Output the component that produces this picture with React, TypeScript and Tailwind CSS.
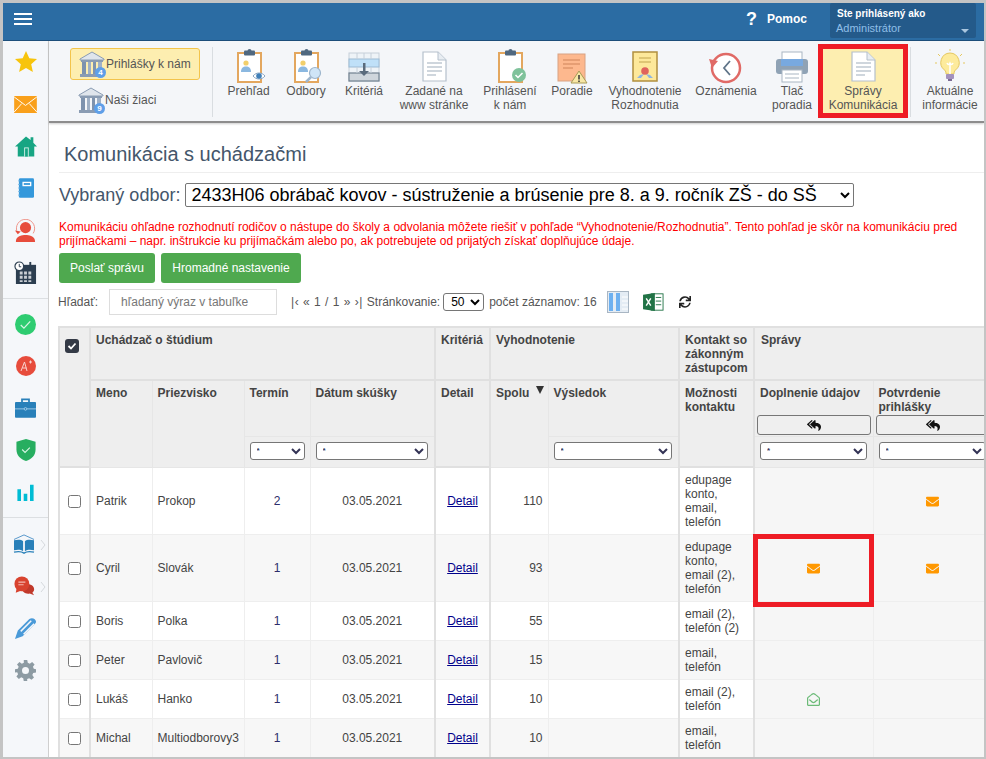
import React from "react";
import { FaReplyAll, FaSync, FaEnvelope, FaRegEnvelopeOpen } from "react-icons/fa";

function Bank({ n }: { n: string }) {
  return (
    <span className="relative block w-[26px] h-[27px] shrink-0">
      <svg viewBox="0 0 26 27" className="w-[26px] h-[27px]">
        <path d="M1 8 13 1l12 7v1H1z" fill="#dfe5ec" stroke="#8a9cb3" strokeWidth="1" />
        <rect x="2" y="9" width="22" height="2" fill="#8a9cb3" />
        <rect x="3" y="11" width="4" height="12" fill="#7e93ae" />
        <rect x="9" y="11" width="3" height="12" fill="#9fb0c5" />
        <rect x="14" y="11" width="3" height="12" fill="#7e93ae" />
        <rect x="19" y="11" width="4" height="12" fill="#9fb0c5" />
        <rect x="1" y="23" width="24" height="3" fill="#8a9cb3" />
      </svg>
      <span className="absolute right-[-1px] bottom-0 w-[11px] h-[11px] rounded-full bg-[#5f9fe8] text-white text-[8px] leading-[11px] text-center font-bold">{n}</span>
    </span>
  );
}

function Clipboard({ children }: { children?: React.ReactNode }) {
  return (
    <svg viewBox="0 0 36 36" className="w-[36px] h-[36px]">
      <rect x="7" y="5" width="23" height="29" fill="#fff" stroke="#e3a75f" strokeWidth="2" />
      <rect x="13" y="2.5" width="11" height="5" rx="1" fill="#50687f" />
      <circle cx="18.5" cy="3" r="2" fill="#50687f" />
      {children}
    </svg>
  );
}

function Person() {
  return (
    <g>
      <circle cx="15" cy="15" r="2.6" fill="#f2cf6b" />
      <path d="M10 24c0-4 2-5.500 5-5.500s5 1.500 5 5.500z" fill="#8bb8e0" />
    </g>
  );
}

function DocIcon() {
  return (
    <svg viewBox="0 0 36 36" className="w-[36px] h-[36px]">
      <path d="M7 4h15l8 8v21H7z" fill="#fff" stroke="#b5c0cc" strokeWidth="1.200" />
      <path d="M22 4v8h8" fill="#e8edf2" stroke="#b5c0cc" strokeWidth="1" />
      <path d="M11 15h15M11 19h15M11 23h15M11 27h9" stroke="#9fadbb" strokeWidth="1.200" />
    </svg>
  );
}

const toolbarItems: { lines: string[]; icon: React.ReactNode; cls: string }[] = [
  {
    lines: ["Prehľad"],
    cls: "ml-[7px] w-[57px]",
    icon: (
      <Clipboard>
        <Person />
        <path d="M22 28c3-4 9-4 12 0-3 4-9 4-12 0z" fill="#fff" stroke="#8ba6c2" />
        <circle cx="28" cy="28" r="2.800" fill="#3f7fb8" />
      </Clipboard>
    ),
  },
  {
    lines: ["Odbory"],
    cls: "w-[58px]",
    icon: (
      <Clipboard>
        <Person />
        <circle cx="27" cy="25" r="5.500" fill="#cfe5f7" stroke="#9db5cc" strokeWidth="1.200" />
        <path d="M23 29l-5 5" stroke="#9db5cc" strokeWidth="2.500" />
      </Clipboard>
    ),
  },
  {
    lines: ["Kritériá"],
    cls: "w-[58px]",
    icon: (
      <svg viewBox="0 0 36 36" className="w-[36px] h-[36px]">
        <rect x="3" y="5" width="30" height="28" fill="#eef3f7" stroke="#c6d0da" />
        <rect x="3" y="11" width="30" height="8" fill="#bfe0f8" stroke="#9dbbd4" />
        <rect x="3" y="25" width="30" height="8" fill="#cfd6dc" stroke="#71808f" strokeWidth="1.200" />
        <path d="M11 5v6M18 5v6M25 5v6M11 19v6M25 19v6" stroke="#c6d0da" />
        <rect x="17" y="15" width="2.500" height="10" fill="#5a6b7c" />
        <path d="M13 23h10l-5 5z" fill="#5a6b7c" />
      </svg>
    ),
  },
  { lines: ["Zadané na", "www stránke"], cls: "w-[82px]", icon: <DocIcon /> },
  {
    lines: ["Prihlásení", "k nám"],
    cls: "ml-[7px] w-[56px]",
    icon: (
      <Clipboard>
        <circle cx="27" cy="27" r="7" fill="#7fc29b" />
        <path d="M23.500 27l2.500 2.500 4.500-4.500" fill="none" stroke="#fff" strokeWidth="1.500" />
      </Clipboard>
    ),
  },
  {
    lines: ["Poradie"],
    cls: "ml-[2px] w-[64px]",
    icon: (
      <svg viewBox="0 0 36 36" className="w-[36px] h-[36px]">
        <rect x="4" y="6" width="27" height="27" fill="#fdb88e" stroke="#d8a283" />
        <path d="M9 12h17M9 16h17M9 20h10" stroke="#d0845a" strokeWidth="1.200" />
        <path d="M25 23l8 12H17z" fill="#f8e7a5" stroke="#a89a55" />
        <path d="M25 27v4.500M25 32.500v1.500" stroke="#333" strokeWidth="1.500" />
      </svg>
    ),
  },
  {
    lines: ["Vyhodnotenie", "Rozhodnutia"],
    cls: "ml-[4px] w-[74px]",
    icon: (
      <svg viewBox="0 0 36 36" className="w-[36px] h-[36px]">
        <rect x="6" y="4" width="24" height="29" fill="#fde89a" stroke="#b08f3e" strokeWidth="1.500" />
        <path d="M12 10h12M12 14h12" stroke="#c2a44f" strokeWidth="1.200" />
        <path d="M13 27l-3 3 4 0 3-4zM23 27l3 3-4 0-3-4z" fill="#8fb5e0" />
        <circle cx="18" cy="23" r="3.800" fill="#e0635c" />
      </svg>
    ),
  },
  {
    lines: ["Oznámenia"],
    cls: "ml-[14px] w-[60px]",
    icon: (
      <svg viewBox="0 0 36 36" className="w-[36px] h-[36px]">
        <circle cx="18" cy="20" r="14" fill="#fff" stroke="#e06a66" strokeWidth="2.500" />
        <path d="M1 11l3 9 6-7z" fill="#e06a66" />
        <path d="M22 13l-6 7 6 7" fill="none" stroke="#5f7488" strokeWidth="1.800" />
      </svg>
    ),
  },
  {
    lines: ["Tlač", "poradia"],
    cls: "ml-[16px] w-[40px]",
    icon: (
      <svg viewBox="0 0 36 36" className="w-[36px] h-[36px]">
        <rect x="8" y="4" width="20" height="8" fill="#fff" stroke="#a9b6c3" />
        <rect x="2" y="11" width="32" height="15" rx="3" fill="#8fa2b5" />
        <rect x="7" y="11" width="22" height="7" fill="#78a9e0" />
        <rect x="8" y="22" width="20" height="12" fill="#fff" stroke="#a9b6c3" />
        <path d="M11 26h14M11 30h14" stroke="#a9b6c3" />
      </svg>
    ),
  },
];

function Toolbar() {
  return (
    <div className="flex h-[82px] pt-[2px] bg-[#f4f6f9] border-b-2 border-[#8d8d8d] shadow-[0_1px_2px_rgba(0,0,0,0.2)]">
      <div className="w-[163px] pl-[21px] pt-[5px] flex flex-col gap-[4px]">
        <div className="w-[130px] h-[32px] rounded-[3px] bg-[#fdeeb0] border border-[#f3c44b] flex items-center pl-[8px] gap-[1px]">
          <Bank n="4" />
          <span>Prihlášky k nám</span>
        </div>
        <div className="w-[130px] h-[32px] flex items-center pl-[8px] gap-[1px]">
          <Bank n="9" />
          <span>Naši žiaci</span>
        </div>
      </div>
      <div className="w-px h-[70px] mt-[4px] bg-[#d9dde1]" />
      {toolbarItems.map((it) => (
        <div key={it.lines[0]} className={`${it.cls} pt-[5px] flex flex-col items-center text-center whitespace-nowrap`}>
          <div className="h-[36px]">{it.icon}</div>
          {it.lines.map((l) => (
            <div key={l} className="h-[14px] leading-[14px]">{l}</div>
          ))}
        </div>
      ))}
      <div className="relative ml-[6px] w-[90px] h-[74px] mt-px bg-[#fdeeb0] pt-[4px] flex flex-col items-center text-center whitespace-nowrap">
        <div className="h-[36px]"><DocIcon /></div>
        <div className="h-[14px] leading-[14px]">Správy</div>
        <div className="h-[14px] leading-[14px]">Komunikácia</div>
        <div className="absolute inset-0 border-[5px] border-[#ee1c25]" />
      </div>
      <div className="ml-[2px] w-px h-[70px] mt-[4px] bg-[#d9dde1]" />
      <div className="ml-[9px] w-[60px] pt-[5px] flex flex-col items-center text-center whitespace-nowrap">
        <div className="h-[36px]">
          <svg viewBox="0 0 36 36" className="w-[36px] h-[36px]">
            <path d="M18 5a9.500 9.500 0 0 0-5.500 17c1.500 1.200 1.500 3 1.500 4h8c0-1 0-2.800 1.500-4A9.500 9.500 0 0 0 18 5z" fill="#fdeb9c" stroke="#e5c860" />
            <path d="M15 15c1 2 2 2 3 0 1 2 2 2 3 0M18 16v10" fill="none" stroke="#fff" strokeWidth="1.500" />
            <rect x="14" y="26" width="8" height="5" rx="1" fill="#a391bd" />
            <path d="M16 32h4" stroke="#7a6b93" strokeWidth="2" />
            <path d="M18 1v2M6 6l2 2M30 6l-2 2M3 15h2M31 15h2" stroke="#e5c860" />
          </svg>
        </div>
        <div className="h-[14px] leading-[14px]">Aktuálne</div>
        <div className="h-[14px] leading-[14px]">informácie</div>
      </div>
    </div>
  );
}

const sideCls = "h-[42px] flex items-center justify-center relative";

function Chevron() {
  return (
    <svg viewBox="0 0 6 12" className="absolute right-[2px] top-[16px] w-[6px] h-[12px]">
      <path d="M1 1l4 5-4 5" fill="none" stroke="#d5d9dd" strokeWidth="1" />
    </svg>
  );
}

function Sidebar() {
  return (
    <div className="w-[46px] shrink-0 bg-[#f5f7fa] border-r border-[#cfcfcf]">
      <div className={sideCls}>
        <svg viewBox="0 0 24 24" className="w-[24px] h-[24px]"><path d="M12 1l3.300 7.300 7.700.8-5.800 5.200 1.700 7.700L12 18l-6.900 4 1.700-7.700L1 9.100l7.700-.8z" fill="#f7c40d" /></svg>
      </div>
      <div className={sideCls}>
        <svg viewBox="0 0 24 18" className="w-[23px] h-[17px]"><rect width="24" height="18" fill="#f9a01b" /><path d="M0 1l12 9 12-9M0 17l8-9M24 17l-8-9" fill="none" stroke="#fff" strokeWidth="1" /></svg>
      </div>
      <div className={sideCls}>
        <svg viewBox="0 0 24 22" className="w-[22px] h-[21px]"><path d="M12 0L0 11h3v11h18V11h3l-4-4V1h-3v3z" fill="#17a583" /><rect x="10" y="12" width="5" height="10" fill="#d5f0e8" /><rect x="11" y="13" width="3" height="9" fill="#17a583" /></svg>
      </div>
      <div className={sideCls}>
        <svg viewBox="0 0 18 22" className="w-[16px] h-[20px]"><rect x="1" width="17" height="22" rx="1.500" fill="#3498db" /><rect x="5" y="4" width="10" height="5" fill="#fff" /><rect x="6.500" y="5.500" width="7" height="2" fill="#3498db" /><path d="M0 3h2M0 7h2M0 11h2M0 15h2M0 19h2" stroke="#7dbbe6" /></svg>
      </div>
      <div className={sideCls}>
        <svg viewBox="0 0 24 24" className="w-[23px] h-[23px]">
          <path d="M3.500 14A9.500 9.500 0 1 1 20 15" fill="none" stroke="#ee9287" strokeWidth="1" />
          <path d="M1 12l3 4 3-3z" fill="#e74c3c" />
          <circle cx="12" cy="9" r="5.800" fill="#e74c3c" />
          <path d="M2 24c0-5 3-6 7-7 2-.5 4-.5 6 0 4 1 7 2 7 7z" fill="#e74c3c" />
        </svg>
      </div>
      <div className={sideCls}>
        <svg viewBox="0 0 24 24" className="w-[23px] h-[23px]">
          <rect x="2" y="4" width="21" height="20" fill="#2c3e50" />
          <path d="M17 1v5" stroke="#2c3e50" strokeWidth="2" />
          <path d="M6 11h3v3H6zM10.500 11h3v3h-3zM15 11h3v3h-3zM6 15.500h3v3H6zM10.500 15.500h3v3h-3zM15 15.500h3v3h-3zM6 20h3v2H6zM10.500 20h3v2h-3zM15 20h3v2h-3z" fill="#c9ced3" />
          <circle cx="5.500" cy="5.500" r="4.500" fill="#fff" stroke="#2c3e50" strokeWidth="1.200" />
          <path d="M5.500 3v3h2" fill="none" stroke="#2c3e50" />
        </svg>
      </div>
      <div className="h-px bg-[#dcdfe2] mt-[5px] mb-[4px]" />
      <div className={sideCls}>
        <svg viewBox="0 0 20 20" className="w-[21px] h-[21px]"><circle cx="10" cy="10" r="10" fill="#2ecc71" /><path d="M5.500 10.500l3 3 6-6.500" fill="none" stroke="#d8f5e4" strokeWidth="1.200" /></svg>
      </div>
      <div className={sideCls}>
        <svg viewBox="0 0 20 20" className="w-[20px] h-[20px]"><circle cx="10" cy="10" r="10" fill="#e74c3c" /><path d="M5 15l3.500-9 2.500 9M6.500 12h4M13 6h3M14.500 4.500v3" fill="none" stroke="#f9d3cf" strokeWidth="1" /></svg>
      </div>
      <div className={sideCls}>
        <svg viewBox="0 0 24 22" className="w-[21px] h-[20px]"><path d="M8 4V1h8v3" fill="none" stroke="#2980b9" strokeWidth="2" /><rect y="4" width="24" height="18" rx="1" fill="#2980b9" /><path d="M0 12h24" stroke="#a9d0ea" /><circle cx="12" cy="12" r="1.500" fill="#2980b9" stroke="#a9d0ea" /></svg>
      </div>
      <div className={sideCls}>
        <svg viewBox="0 0 20 23" className="w-[20px] h-[22px]"><path d="M10 0l10 3v8c0 6-4 10-10 12C4 21 0 17 0 11V3z" fill="#27ae60" /><path d="M6 11l3 3 5-5" fill="none" stroke="#d8f5e4" strokeWidth="1.200" /></svg>
      </div>
      <div className={sideCls}>
        <svg viewBox="0 0 20 20" className="w-[19px] h-[18px]"><path d="M1 7h4v13H1zM8 12h4v8H8zM15 2h4v18h-4z" fill="#00bcd4" /></svg>
      </div>
      <div className="h-px bg-[#dcdfe2] mt-[4px] mb-[5px]" />
      <div className={sideCls}>
        <svg viewBox="0 0 24 22" className="w-[22px] h-[20px] mr-[3px]"><path d="M1 6l11-5 11 5" fill="none" stroke="#4a90c8" strokeWidth="1" /><path d="M1 7c4-1 8-1 10 1v11c-3-2-6-2-10-1zM23 7c-4-1-8-1-10 1v11c3-2 6-2 10-1z" fill="#2980b9" /><path d="M1 20c4-1 8-1 11 1 3-2 7-2 11-1" fill="none" stroke="#2980b9" strokeWidth="1.500" /></svg>
        <Chevron />
      </div>
      <div className={sideCls}>
        <svg viewBox="0 0 24 24" className="w-[21px] h-[21px] mr-[3px]"><path d="M14 9c5 0 9 2 9 6 0 2-1 3-2 4l2 3-5-2c-5 1-9-2-9-6z" fill="#c0392b" /><circle cx="9" cy="9" r="8.500" fill="#d8432f" /><path d="M2 19l1-5 4 3z" fill="#d8432f" /><path d="M5 7h8M5 10h6" stroke="#f3b8af" strokeWidth="1.200" /></svg>
        <Chevron />
      </div>
      <div className={sideCls}>
        <svg viewBox="0 0 24 24" className="w-[23px] h-[23px]"><path d="M1 23l3-9L16 2c3-2 7 0 7 3 0 1-1 2-2 3L9 20z" fill="#4a9ad8" /><path d="M7 15L18 4M10 18L21 7" stroke="#f5f7fa" strokeWidth="1.500" /></svg>
      </div>
      <div className={sideCls}>
        <svg viewBox="0 0 24 24" className="w-[21px] h-[21px]"><path d="M10 0h4l.6 3.200 2.300 1 2.700-1.900 2.800 2.800-1.900 2.700 1 2.300L24 10.700v3.600l-3.200.6-1 2.300 1.900 2.700-2.800 2.800-2.700-1.900-2.300 1L14 24h-4l-.6-3.200-2.300-1-2.700 1.900-2.800-2.800 1.900-2.700-1-2.300L0 14.300v-3.600l3.200-.6 1-2.300-1.900-2.700 2.800-2.800 2.700 1.900 2.300-1zM12 8a4 4 0 1 0 0 8 4 4 0 0 0 0-8z" fill="#8d9ba3" /></svg>
      </div>
    </div>
  );
}

const hTh = "bg-[#eeeeee] border-2 border-[#e0e0e0] align-top text-left font-bold px-[5px] pt-[5px] pb-[3px] leading-[14px]";
const hThin = "bg-[#eeeeee] border border-[#e6e6e6] align-top text-left font-bold px-[5px] py-[5px] leading-[14px]";

function Filter({ w }: { w: string }) {
  return (
    <select className={`${w} h-[18px] block bg-white border border-[#767676] rounded-[3px] text-[8px] pl-[2px] text-[#335]`} defaultValue="*">
      <option>*</option>
    </select>
  );
}

function ReplyBtn() {
  return (
    <button className="w-[114px] h-[20px] bg-[#efefef] border border-[#767676] rounded-[3px] flex items-center justify-center">
      <FaReplyAll className="w-[14px] h-[13px] text-[#111]" />
    </button>
  );
}

type Row = { m: string; p: string; t: string; s: string; c: string[]; h: string; a?: React.ReactNode; b?: React.ReactNode };
const Orange = () => <FaEnvelope className="inline-block w-[13px] h-[13px] text-[#ff9800]" />;
const rows: Row[] = [
  { m: "Patrik", p: "Prokop", t: "2", s: "110", c: ["edupage", "konto,", "email,", "telefón"], h: "h-[67px]", b: <Orange /> },
  { m: "Cyril", p: "Slovák", t: "1", s: "93", c: ["edupage", "konto,", "email (2),", "telefón"], h: "h-[67px]", a: <Orange />, b: <Orange /> },
  { m: "Boris", p: "Polka", t: "1", s: "55", c: ["email (2),", "telefón (2)"], h: "h-[39px]" },
  { m: "Peter", p: "Pavlovič", t: "1", s: "15", c: ["email,", "telefón"], h: "h-[39px]" },
  { m: "Lukáš", p: "Hanko", t: "1", s: "10", c: ["email (2),", "telefón"], h: "h-[39px]", a: <FaRegEnvelopeOpen className="inline-block w-[13px] h-[13px] text-[#6cbb78]" /> },
  { m: "Michal", p: "Multiodborovy3", t: "1", s: "10", c: ["email,", "telefón"], h: "h-[39px]" },
];

function DataTable() {
  const thick = "border-l-2 border-l-[#e0e0e0]";
  return (
    <table className="table-fixed border-collapse w-[932px] leading-[14px] text-[#444]">
      <colgroup>
        <col className="w-[31px]" />
        <col className="w-[62px]" />
        <col className="w-[92px]" />
        <col className="w-[66px]" />
        <col className="w-[125px]" />
        <col className="w-[55px]" />
        <col className="w-[58px]" />
        <col className="w-[131px]" />
        <col className="w-[75px]" />
        <col className="w-[119px]" />
        <col className="w-[118px]" />
      </colgroup>
      <thead>
        <tr className="h-[53px]">
          <th rowSpan={3} className={`${hTh} text-center pt-[11px]`}>
            <span className="inline-flex w-[14px] h-[14px] rounded-[3px] bg-[#343a46] items-center justify-center">
              <svg viewBox="0 0 10 10" className="w-[10px] h-[10px]"><path d="M1.500 5l2.500 2.500 4.500-5" fill="none" stroke="#fff" strokeWidth="1.800" /></svg>
            </span>
          </th>
          <th colSpan={4} className={hTh}>Uchádzač o štúdium</th>
          <th className={hTh}>Kritériá</th>
          <th colSpan={2} className={hTh}>Vyhodnotenie</th>
          <th className={hTh}>Kontakt so zákonným zástupcom</th>
          <th colSpan={2} className={`${hTh} !pl-[6px]`}>Správy</th>
        </tr>
        <tr className="h-[56px]">
          <th rowSpan={2} className={hThin}>Meno</th>
          <th rowSpan={2} className={hThin}>Priezvisko</th>
          <th className={hThin}>Termín</th>
          <th className={hThin}>Dátum skúšky</th>
          <th rowSpan={2} className={hTh}>Detail</th>
          <th rowSpan={2} className={hThin}>
            <div className="flex justify-between items-start">
              <span>Spolu</span>
              <svg viewBox="0 0 8 8" className="w-[8px] h-[8px] mr-[-1px]"><path d="M0 0h8L4 8z" fill="#333" /></svg>
            </div>
          </th>
          <th className={hThin}>Výsledok</th>
          <th rowSpan={2} className={hTh}>Možnosti kontaktu</th>
          <th className={`${hThin} !px-[2px] !pb-0 ${thick}`}>
            <div className="h-[29px] pl-[3px]">Doplnenie údajov</div>
            <ReplyBtn />
          </th>
          <th className={`${hThin} !px-[2px] !pb-0`}>
            <div className="h-[29px] pl-[3px]">Potvrdenie prihlášky</div>
            <ReplyBtn />
          </th>
        </tr>
        <tr className="h-[31px]">
          <th className={`${hThin} align-middle`}><Filter w="w-[55px]" /></th>
          <th className={`${hThin} align-middle`}><Filter w="w-[112px]" /></th>
          <th className={`${hThin} align-middle`}><Filter w="w-[118px]" /></th>
          <th className={`${hThin} align-middle ${thick}`}><Filter w="w-[107px]" /></th>
          <th className={`${hThin} align-middle`}><Filter w="w-[107px]" /></th>
        </tr>
      </thead>
      <tbody>
        {rows.map((r, i) => {
          const bg = i % 2 === 0 ? "bg-white" : "bg-[#f7f7f7]";
          const td = "border border-[#eeeeee] px-[5px] align-middle";
          return (
            <tr key={r.m} className={`${bg} ${r.h}`}>
              <td className={`${td} border-x-2 border-x-[#e0e0e0] text-center`}>
                <input type="checkbox" className="w-[13px] h-[13px] align-middle" />
              </td>
              <td className={td}>{r.m}</td>
              <td className={`${td} whitespace-nowrap`}>{r.p}</td>
              <td className={`${td} text-center text-[#2d2d6b]`}>{r.t}</td>
              <td className={`${td} text-center`}>03.05.2021</td>
              <td className={`${td} border-x-2 border-x-[#e0e0e0] text-center`}>
                <a className="underline text-[#00008b]">Detail</a>
              </td>
              <td className={`${td} text-right`}>{r.s}</td>
              <td className={td}></td>
              <td className={`${td} border-x-2 border-x-[#e0e0e0]`}>
                {r.c.map((l) => <div key={l}>{l}</div>)}
              </td>
              <td className={`${td} bg-[#f6f6f6] text-center`}>{r.a}</td>
              <td className={`${td} bg-[#f6f6f6] text-center`}>{r.b}</td>
            </tr>
          );
        })}
      </tbody>
    </table>
  );
}

export default function App() {
  return (
    <div className="w-[986px] h-[759px] overflow-hidden bg-[#c4c4c4] pt-[3px] pb-[2px] pl-[3px] pr-[2px] text-[12px] leading-[14px] text-[#555]" style={{ fontFamily: '"Liberation Sans", Arial, sans-serif' }}>
      <div className="w-full h-full flex flex-col bg-white overflow-hidden">
        <header className="h-[38px] shrink-0 bg-[#2b6ca3] border-b border-[#1d4f7c] flex items-start text-white">
          <div className="ml-[11px] mt-[10px] w-[18px] flex flex-col gap-[3px]">
            <div className="h-[2px] bg-white" />
            <div className="h-[2px] bg-white" />
            <div className="h-[2px] bg-white" />
          </div>
          <div className="ml-auto mt-[7px] flex items-center h-[18px]">
            <span className="text-[18px] font-bold leading-[18px]">?</span>
            <span className="ml-[10px] font-bold">Pomoc</span>
          </div>
          <div className="ml-[23px] mr-[8px] w-[146px] h-[35px] bg-[#245a8a] rounded-[2px] pl-[7px] pt-[4px] relative">
            <div className="text-[10px] font-bold leading-[14px] whitespace-nowrap">Ste prihlásený ako</div>
            <div className="text-[#90bfe8] text-[11px] leading-[15px] -ml-px">Administrátor</div>
            <div className="absolute right-[7px] bottom-[5px] w-0 h-0 border-x-[4px] border-x-transparent border-t-[4px] border-t-[#a9c6df]" />
          </div>
        </header>
        <div className="flex flex-1 min-h-0">
          <Sidebar />
          <main className="flex-1 min-w-0 flex flex-col">
            <Toolbar />
            <div className="relative flex-1 min-h-0 overflow-hidden pl-[9px]">
              <h1 className="h-[50px] border-b border-[#eeeeee] pl-[5px] pt-[19px] text-[20px] leading-[24px] text-[#44566b] font-normal ml-px">Komunikácia s uchádzačmi</h1>
              <div className="flex items-center mt-[10px] h-[24px] text-[18px] text-[#44566b] ml-px">
                <span>Vybraný odbor:</span>
                <select className="ml-[5px] w-[669px] h-[24px] bg-white border border-[#767676] rounded-[2px] text-[18px] leading-[22px] text-black pl-[1px]" defaultValue="a">
                  <option value="a">2433H06 obrábač kovov - sústruženie a brúsenie pre 8. a 9. ročník ZŠ - do SŠ</option>
                </select>
              </div>
              <p className="mt-[13px] text-[#ff0000] ml-px w-[905px]">
                Komunikáciu ohľadne rozhodnutí rodičov o nástupe do školy a odvolania môžete riešiť v pohľade “Vyhodnotenie/Rozhodnutia”. Tento pohľad je skôr na komunikáciu pred prijímačkami – napr. inštrukcie ku prijímačkám alebo po, ak potrebujete od prijatých získať doplňujúce údaje.
              </p>
              <div className="flex gap-[6px] mt-[5px] ml-px">
                <button className="w-[96px] h-[30px] bg-[#4fa94f] rounded-[3px] text-white">Poslať správu</button>
                <button className="w-[140px] h-[30px] bg-[#4fa94f] rounded-[3px] text-white">Hromadné nastavenie</button>
              </div>
              <div className="flex items-center h-[26px] mt-[6px] text-[#555] whitespace-nowrap">
                <span>Hľadať:</span>
                <div className="ml-[11px] w-[168px] h-[26px] border border-[#dddddd] pl-[11px] flex items-center text-[#777]">hľadaný výraz v tabuľke</div>
                <span className="ml-[14px] tracking-[0.5px]">|‹ « 1 / 1 » ›|</span>
                <span className="ml-[4px]">Stránkovanie:</span>
                <select className="ml-[3px] w-[41px] h-[18px] bg-white border border-[#767676] rounded-[3px] text-[12px] text-black pl-[3px]" defaultValue="50">
                  <option>50</option>
                </select>
                <span className="ml-[5px]">počet záznamov: 16</span>
                <svg viewBox="0 0 22 22" className="ml-[10px] w-[22px] h-[22px]">
                  <rect x="0.500" y="0.500" width="21" height="21" fill="#e4ecf4" stroke="#a9b6c3" />
                  <rect x="2" y="2" width="4" height="18" fill="#6db0f0" />
                  <rect x="9" y="2" width="4" height="18" fill="#6db0f0" />
                  <path d="M15 6h6M15 10h6M15 14h6M15 18h6" stroke="#fff" />
                </svg>
                <svg viewBox="0 0 23 22" className="ml-[14px] w-[21px] h-[20px]">
                  <rect x="9" y="2" width="13" height="18" fill="#fff" stroke="#217346" />
                  <path d="M14 6h6M14 10h6M14 14h6" stroke="#217346" />
                  <path d="M0 3l13-2v20L0 19z" fill="#217346" />
                  <path d="M3.500 7l5 8M8.500 7l-5 8" stroke="#fff" strokeWidth="1.600" />
                </svg>
                <FaSync className="ml-[15px] w-[12px] h-[12px] text-[#222]" />
              </div>
              <div className="mt-[11px] overflow-hidden">
                <DataTable />
              </div>
              <div className="absolute left-[704px] top-[411px] w-[121px] h-[73px] border-[5px] border-[#ee1c25]" />
            </div>
          </main>
        </div>
      </div>
    </div>
  );
}
